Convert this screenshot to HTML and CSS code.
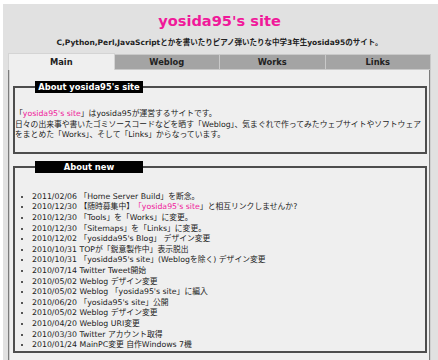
FILE: index.html
```html
<!DOCTYPE html>
<html lang="ja">
<head>
  <meta charset="UTF-8" />
  <meta name="viewport" content="width=device-width, initial-scale=1.0"/>
  <title>yosida95's site</title>
  <link rel="stylesheet" href="styles.css">
</head>
<body>
  <div class="page">
    <div class="masthead">
      <h1 class="site-title">yosida95's site</h1>
      <p class="tagline">C,Python,Perl,JavaScriptとかを書いたりピアノ弾いたりな中学3年生yosida95のサイト。</p>
    </div>

    <ul class="tabs">
      <li class="tab current"><a href="#">Main</a></li>
      <li class="tab"><a href="#">Weblog</a></li>
      <li class="tab"><a href="#">Works</a></li>
      <li class="tab"><a href="#">Links</a></li>
    </ul>

    <div class="panel">
      <fieldset class="box">
        <legend><span>About yosida95's site</span></legend>
        <p class="about">「<a href="#">yosida95's site</a>」はyosida95が運営するサイトです。<br>
        日々の出来事や書いたゴミソースコードなどを晒す「Weblog」、気まぐれで作ってみたウェブサイトやソフトウェアをまとめた「Works」、そして「Links」からなっています。</p>
      </fieldset>

      <fieldset class="box">
        <legend><span>About new</span></legend>
        <ul class="news">
          <li>2011/02/06 「Home Server Build」を断念。</li>
          <li>2010/12/30 【随時募集中】　<a href="#">「yosida95's site</a>」と相互リンクしませんか?</li>
          <li>2010/12/30 「Tools」を「Works」に変更。</li>
          <li>2010/12/30 「Sitemaps」を「Links」に変更。</li>
          <li>2010/12/02 「yosidda95's Blog」 デザイン変更</li>
          <li>2010/10/31 TOPが「鋭意製作中」表示脱出</li>
          <li>2010/10/31 「yosidda95's site」(Weblogを除く) デザイン変更</li>
          <li>2010/07/14 Twitter Tweet開始</li>
          <li>2010/05/02 Weblog デザイン変更</li>
          <li>2010/05/02 Weblog 「yosida95's site」に編入</li>
          <li>2010/06/20 「yosida95's site」公開</li>
          <li>2010/05/02 Weblog デザイン変更</li>
          <li>2010/04/20 Weblog URI変更</li>
          <li>2010/03/30 Twitter アカウント取得</li>
          <li>2010/01/24 MainPC変更 自作Windows 7機</li>
        </ul>
      </fieldset>
    </div>
  </div>
</body>
</html>
```

FILE: styles.css
```css
body {
  margin: 4px 0 0 3px;
  font-family: "DejaVu Sans", "Noto Sans CJK JP", sans-serif;
  font-size: 7.8px;
  line-height: 10.6px;
  color: #222;
  background-color: #ffffff;
}

a {
  color: #f0199a;
  text-decoration: none;
}

.page {
  background-color: #e1e1e1;
  padding: 0 7px 0 5px;
  min-height: 400px;
}

.masthead {
  text-align: center;
  overflow: hidden;
}

.site-title {
  margin: 8px 0 0;
  font-size: 14.6px;
  line-height: 18px;
  color: #f0199a;
}

.tagline {
  margin: 8px 0 5px;
  font-size: 7.5px;
  font-weight: bold;
  line-height: 10px;
}

.tabs {
  display: flex;
  margin: 0;
  padding: 0;
  list-style: none;
}

.tab {
  flex: 1;
  text-align: center;
  font-size: 8.3px;
  font-weight: bold;
  line-height: 14px;
  background-color: #a4a4a4;
  border: 1px solid #c9c9c9;
  border-left-width: 0;
  margin-top: 1px;
}

.tab a {
  color: #222;
  display: block;
}

.tab.current {
  background-color: #efefef;
  border: 1px solid #d4d4d4;
  border-bottom: none;
  margin-top: 0;
  line-height: 16px;
}

.panel {
  background-color: #efefef;
  border: 2px groove #cfcfcf;
  border-top: none;
  padding: 11px 2px 0 3px;
  min-height: 320px;
}

.box {
  margin: 0 0 7px;
  padding: 0;
  border: 2px solid #4d4d4d;
  min-width: 0;
}

.box legend {
  margin-left: 20px;
  padding: 0;
  width: 108px;
  height: 12px;
  line-height: 12px;
  background-color: #000;
  color: #fff;
  font-size: 8.4px;
  font-weight: bold;
  text-align: left;
}

.box legend span {
  display: block;
  text-align: center;
}

.about {
  margin: 16px 0 11px;
}

.news {
  margin: 19px 0 0;
  padding-left: 17px;
}
```
